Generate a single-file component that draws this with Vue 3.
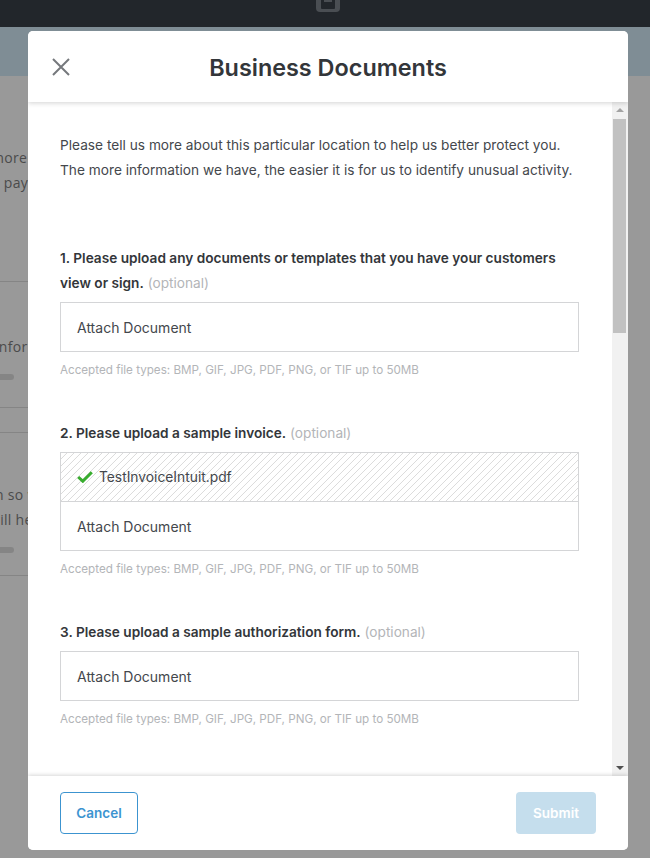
<script setup>
const fileTypes = "Accepted file types: BMP, GIF, JPG, PDF, PNG, or TIF up to 50MB";

const questions = [
  {
    id: 1,
    label: "1. Please upload any documents or templates that you have your customers view or sign.",
    files: [],
  },
  {
    id: 2,
    label: "2. Please upload a sample invoice.",
    files: ["TestInvoiceIntuit.pdf"],
  },
  {
    id: 3,
    label: "3. Please upload a sample authorization form.",
    files: [],
  },
  {
    id: 4,
    label: "4. Please upload any other documents that help describe your business.",
    files: [],
  },
];
</script>

<template>
  <div class="page">
    <header class="topbar">
      <span class="topbar-logo"><span class="topbar-logo-dot"></span></span>
    </header>
    <div class="band"></div>
    <main class="behind">
      <p class="behind-text first">more</p>
      <p class="behind-text pay">l pay</p>
      <hr class="rule rule-a" />
      <p class="behind-text inform">inform</p>
      <div class="pill"></div>
      <hr class="rule rule-b" />
      <hr class="rule rule-c" />
      <p class="behind-text so">n so w</p>
      <p class="behind-text hel">will he</p>
      <div class="pill pill-b"></div>
      <hr class="rule rule-d" />
    </main>

    <section class="modal">
      <div class="modal-head">
        <button class="close" aria-label="Close">
          <svg width="20" height="20" viewBox="0 0 20 20">
            <path d="M2 2 L18 18 M18 2 L2 18" stroke="#75787c" stroke-width="2" fill="none" />
          </svg>
        </button>
        <h1>Business Documents</h1>
      </div>

      <div class="modal-body">
        <div class="scroller">
          <p class="intro">
            Please tell us more about this particular location to help us better protect you.<br />
            The more information we have, the easier it is for us to identify unusual activity.
          </p>

          <div v-for="q in questions" :key="q.id" class="question">
            <p class="q-label">
              <strong>{{ q.label }}</strong> <span class="optional">(optional)</span>
            </p>
            <div class="upload">
              <div v-for="f in q.files" :key="f" class="file-row">
                <svg width="16" height="12" viewBox="0 0 16 12">
                  <path d="M1.2 6 L5.8 10.2 L14.8 1.2" stroke="#38ad2e" stroke-width="3" fill="none" />
                </svg>
                <span>{{ f }}</span>
              </div>
              <div class="attach">Attach Document</div>
            </div>
            <p class="hint">{{ fileTypes }}</p>
          </div>
        </div>

        <div class="scrollbar">
          <span class="arrow up"></span>
          <div class="track"><div class="thumb"></div></div>
          <span class="arrow down"></span>
        </div>
      </div>

      <div class="modal-foot">
        <button class="btn cancel">Cancel</button>
        <button class="btn submit">Submit</button>
      </div>
    </section>
  </div>
</template>

<style>
html,
body {
  margin: 0;
  background: #999;
}
</style>

<style scoped>
.page {
  position: relative;
  width: 650px;
  height: 858px;
  overflow: hidden;
  background: #999;
  font-family: Inter, "Liberation Sans", sans-serif;
}

.topbar {
  height: 27px;
  background: #22262b;
  display: flex;
  justify-content: center;
  overflow: hidden;
}

.topbar-logo {
  display: block;
  width: 24px;
  height: 24px;
  margin-top: -12px;
  margin-left: 6px;
  border-radius: 4px;
  background: #4a4e53;
  position: relative;
}

.topbar-logo-dot {
  position: absolute;
  left: 5px;
  top: 7px;
  width: 14px;
  height: 14px;
  border-radius: 1px;
  background: #22262b;
}

.topbar-logo-dot::after {
  content: "";
  position: absolute;
  left: 3px;
  top: 0;
  width: 8px;
  height: 7px;
  background: #4a4e53;
}

.band {
  height: 49px;
  background: #7f8d95;
}

.behind {
  color: #4b4b4b;
  font-size: 14px;
  position: relative;
}

.behind-text {
  margin: 0;
  line-height: 20px;
  white-space: nowrap;
  letter-spacing: 0.3px;
  font-family: "Open Sans", sans-serif;
}

.behind-text.first {
  margin-top: 72px;
  margin-left: -9px;
}

.behind-text.pay {
  margin-top: 5px;
  margin-left: -4px;
}

.rule {
  margin: 0;
  border: 0;
  height: 1px;
  width: 28px;
  background: #858585;
}

.rule-a {
  margin-top: 88px;
}

.behind-text.inform {
  margin-top: 55px;
  margin-left: -5px;
}

.pill {
  width: 14px;
  height: 6px;
  margin-top: 17px;
  border-radius: 0 3px 3px 0;
  background: #858585;
}

.rule-b {
  margin-top: 27px;
}

.rule-c {
  margin-top: 24px;
}

.behind-text.so {
  margin-top: 52px;
  margin-left: -5px;
}

.behind-text.hel {
  margin-top: 5px;
  margin-left: -11px;
}

.pill-b {
  margin-top: 17px;
}

.rule-d {
  margin-top: 22px;
}

.modal {
  position: absolute;
  left: 28px;
  top: 31px;
  width: 600px;
  height: 819px;
  display: flex;
  flex-direction: column;
  background: #fff;
  border-radius: 5px;
  overflow: hidden;
}

.modal-head {
  position: relative;
  z-index: 1;
  height: 71px;
  flex: none;
  display: flex;
  align-items: center;
  justify-content: center;
  background: #fff;
  box-shadow: 0 1px 5px rgba(0, 0, 0, 0.18);
}

.modal-head h1 {
  margin: 2px 0 0;
  font-size: 23.4px;
  font-weight: 600;
  color: #33363a;
}

.close {
  position: absolute;
  left: 23px;
  top: 26px;
  padding: 0;
  border: 0;
  background: none;
  display: flex;
}

.modal-body {
  flex: 1;
  min-height: 0;
  display: flex;
}

.scroller {
  flex: 1;
  min-width: 0;
  overflow: hidden;
  padding: 31px 33px 0 32px;
}

.intro {
  margin: 0 0 63px;
  font-size: 13.7px;
  line-height: 25px;
  white-space: nowrap;
  color: #44474c;
}

.question {
  margin-bottom: 42px;
}

.question:last-child {
  margin-top: 46px;
}

.q-label {
  margin: 0 0 6px;
  font-size: 13.65px;
  line-height: 25px;
  color: #33363a;
}

.q-label strong {
  font-weight: 600;
}

.optional {
  color: #b3b5b8;
}

.upload {
  border: 1px solid #d4d5d7;
}

.file-row {
  height: 48px;
  padding-left: 16px;
  display: flex;
  align-items: center;
  gap: 6px;
  font-size: 13.8px;
  color: #44474c;
  border-bottom: 1px solid #d4d5d7;
  background: repeating-linear-gradient(
    -45deg,
    #fff 0,
    #fff 3.7px,
    #dcdcdc 4.2px,
    #dcdcdc 4.5px,
    #fff 4.95px
  );
}

.attach {
  height: 48px;
  padding-left: 16px;
  display: flex;
  align-items: center;
  font-size: 14px;
  color: #44474c;
}

.hint {
  margin: 9px 0 0;
  font-size: 11.65px;
  line-height: 18px;
  color: #b3b5b8;
}

.scrollbar {
  width: 16px;
  flex: none;
  display: flex;
  flex-direction: column;
  align-items: center;
  background: #f1f1f1;
}

.arrow {
  flex: none;
  width: 0;
  height: 0;
  border-left: 4px solid transparent;
  border-right: 4px solid transparent;
}

.arrow.up {
  margin: 6px 1px 5px 0;
  border-bottom: 4px solid #a3a3a3;
}

.arrow.down {
  margin: 5px 1px 6px 0;
  border-top: 4px solid #505050;
}

.track {
  flex: 1;
  width: 100%;
}

.thumb {
  width: 13px;
  height: 214px;
  margin: 2px 0 0 1px;
  background: #c1c1c1;
}

.modal-foot {
  position: relative;
  z-index: 1;
  height: 74px;
  flex: none;
  display: flex;
  align-items: center;
  justify-content: space-between;
  padding: 0 32px;
  background: #fff;
  box-shadow: 0 -1px 4px rgba(0, 0, 0, 0.16);
}

.btn {
  height: 42px;
  border-radius: 4px;
  font-family: inherit;
  font-size: 13.5px;
  font-weight: 600;
}

.cancel {
  width: 78px;
  border: 1px solid #3c94d0;
  background: #fff;
  color: #3c94d0;
}

.submit {
  width: 80px;
  border: 0;
  background: #c5deed;
  color: #fff;
}
</style>
